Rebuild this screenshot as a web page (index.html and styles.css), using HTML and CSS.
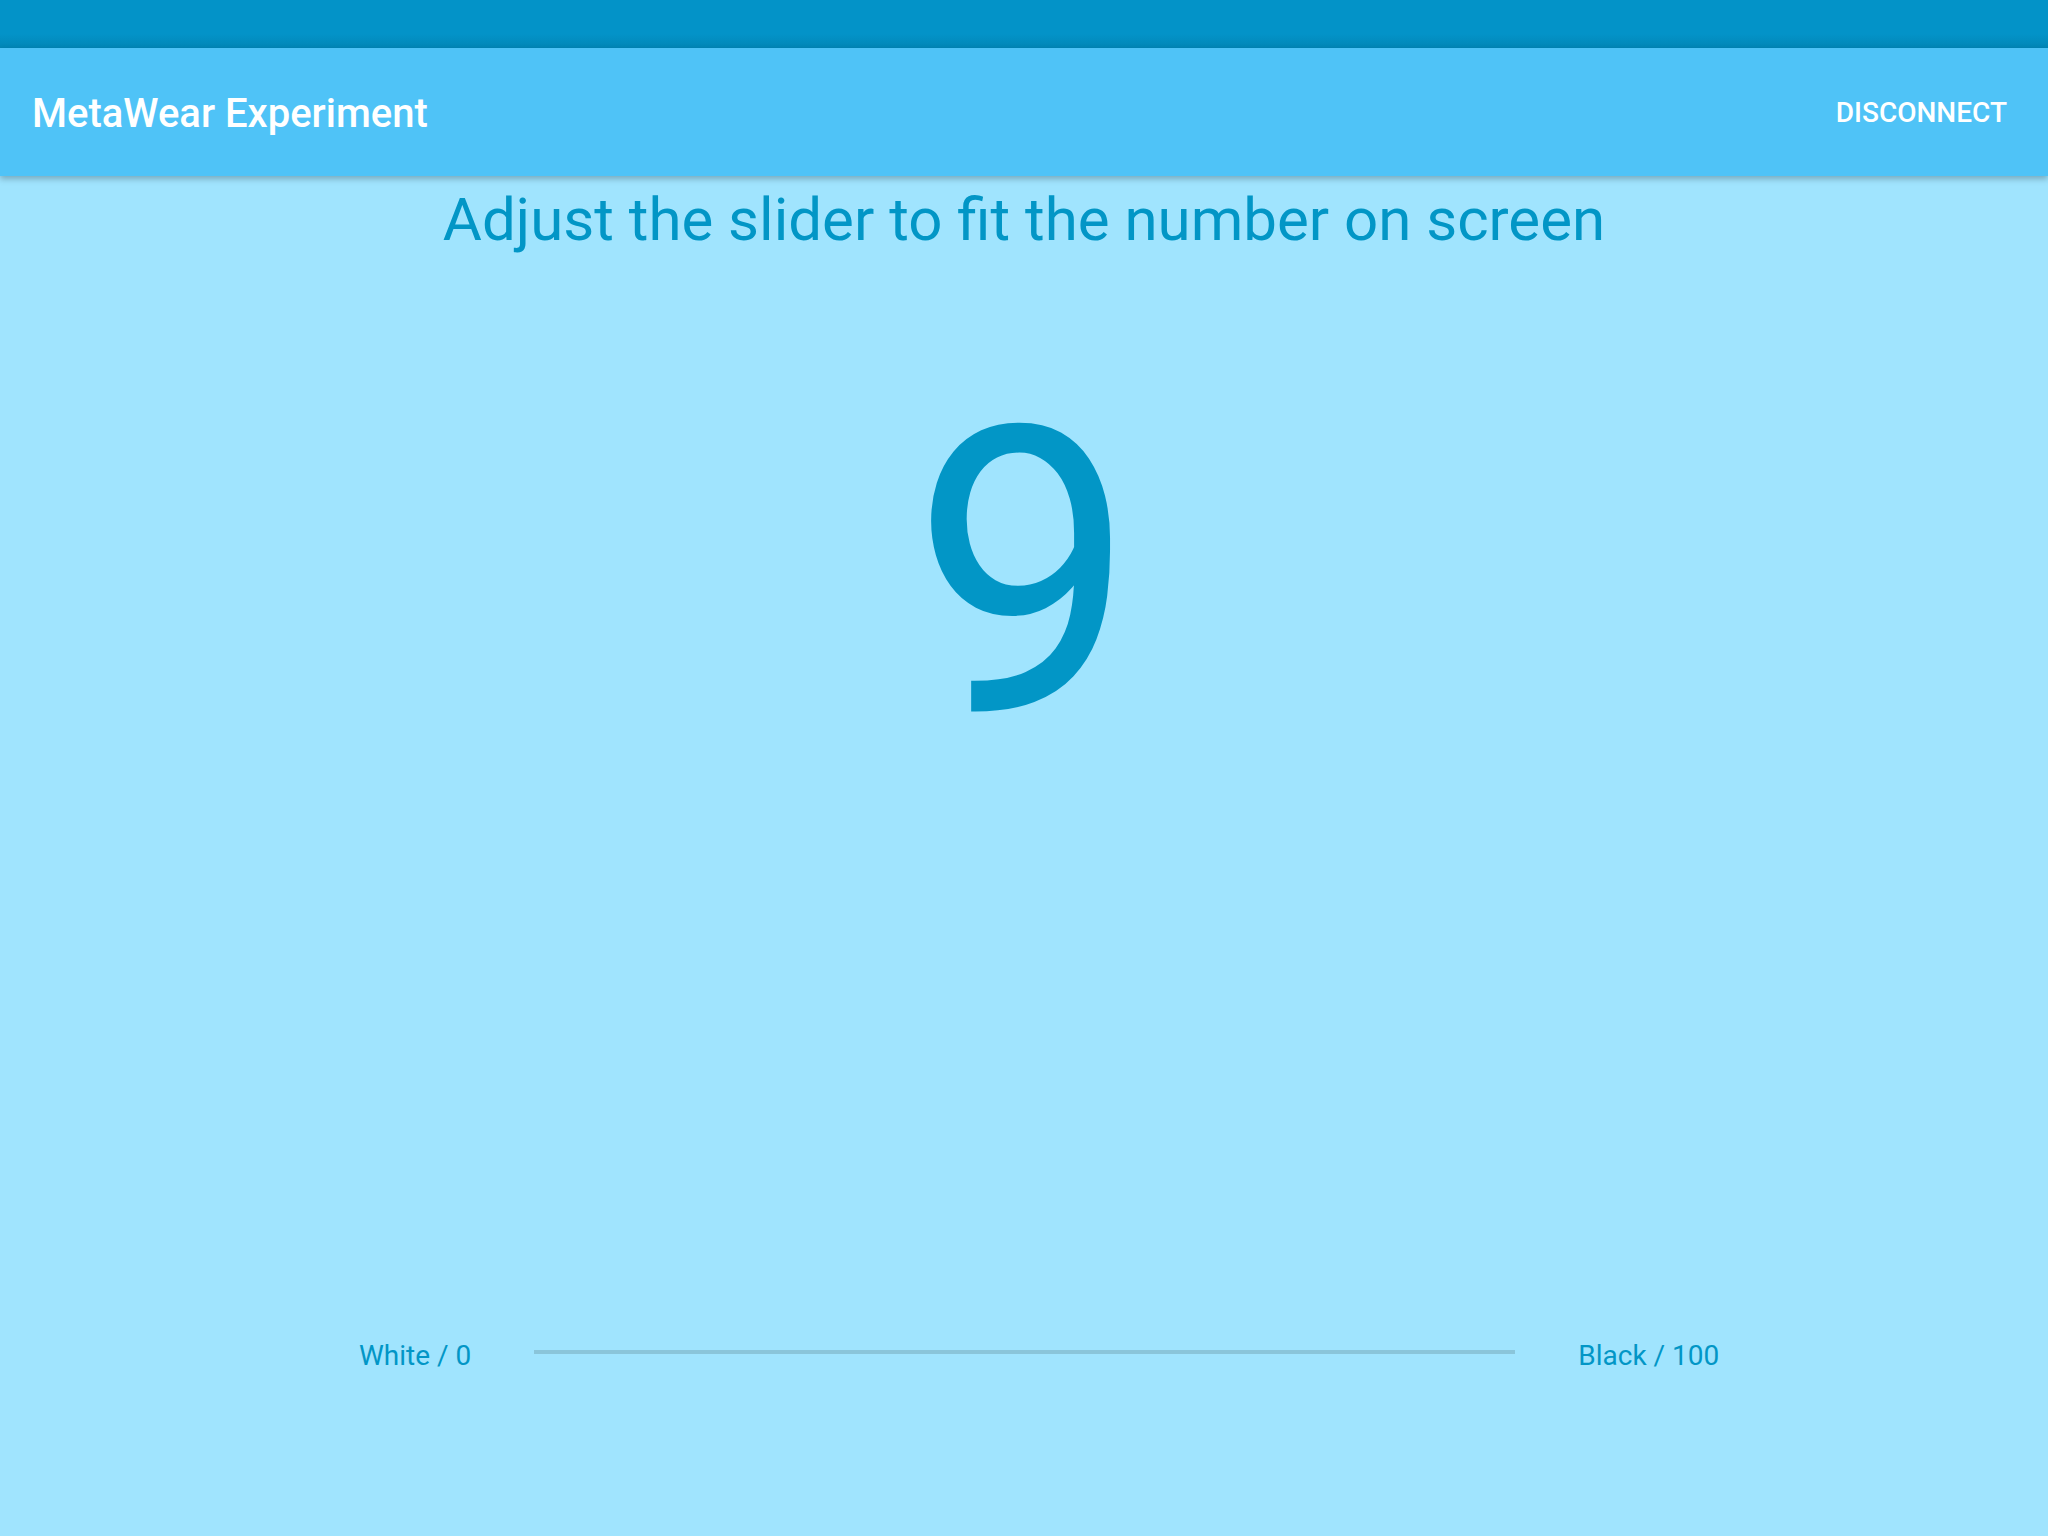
FILE: index.html
```html
<!DOCTYPE html>
<html>
<head>
<meta charset="utf-8">
<link rel="stylesheet" href="styles.css">
</head>
<body>
<div class="statusbar"></div>
<header class="appbar">
  <div class="title">MetaWear Experiment</div>
  <div class="action">DISCONNECT</div>
</header>
<main class="content">
  <div class="instruction">Adjust the slider to fit the number on screen</div>
  <div class="number">9</div>
  <div class="slider-row">
    <span class="label">White / 0</span>
    <div class="track"></div>
    <span class="label">Black / 100</span>
  </div>
</main>
</body>
</html>
```
FILE: styles.css
```css
html, body {
  margin: 0;
  padding: 0;
}
body {
  width: 2048px;
  height: 1536px;
  background: #a0e4fe;
  font-family: Roboto, "Liberation Sans", sans-serif;
  overflow: hidden;
  display: flex;
  flex-direction: column;
}
.statusbar {
  height: 48px;
  background: linear-gradient(to bottom, #0393c8 0, #0393c8 34px, #0286b6 48px);
  flex: none;
}
.appbar {
  height: 128px;
  background: #4fc3f7;
  display: flex;
  align-items: center;
  justify-content: space-between;
  padding: 0 41px 0 32px;
  box-shadow: 0 3px 6px rgba(0, 0, 0, 0.25);
  position: relative;
  z-index: 1;
  flex: none;
}
.title {
  color: #ffffff;
  font-size: 40px;
  font-weight: 500;
  margin-top: 2px;
}
.action {
  color: #ffffff;
  font-size: 28px;
  font-weight: 500;
}
.content {
  flex: 1;
  display: flex;
  flex-direction: column;
  align-items: center;
  color: #0296c6;
}
.instruction {
  margin-top: 8px;
  font-size: 60px;
  line-height: 72px;
  text-align: center;
}
.number {
  margin-top: 119px;
  font-family: Roboto, sans-serif;
  font-size: 400px;
  line-height: 1;
  height: 400px;
}
.slider-row {
  margin-top: 565px;
  align-self: flex-start;
  margin-left: 359px;
  display: flex;
  align-items: center;
  gap: 63px;
}
.label {
  font-size: 28px;
  line-height: 32px;
}
.track {
  width: 981px;
  height: 4px;
  margin-bottom: 8px;
  background: #8ac5da;
}
```
